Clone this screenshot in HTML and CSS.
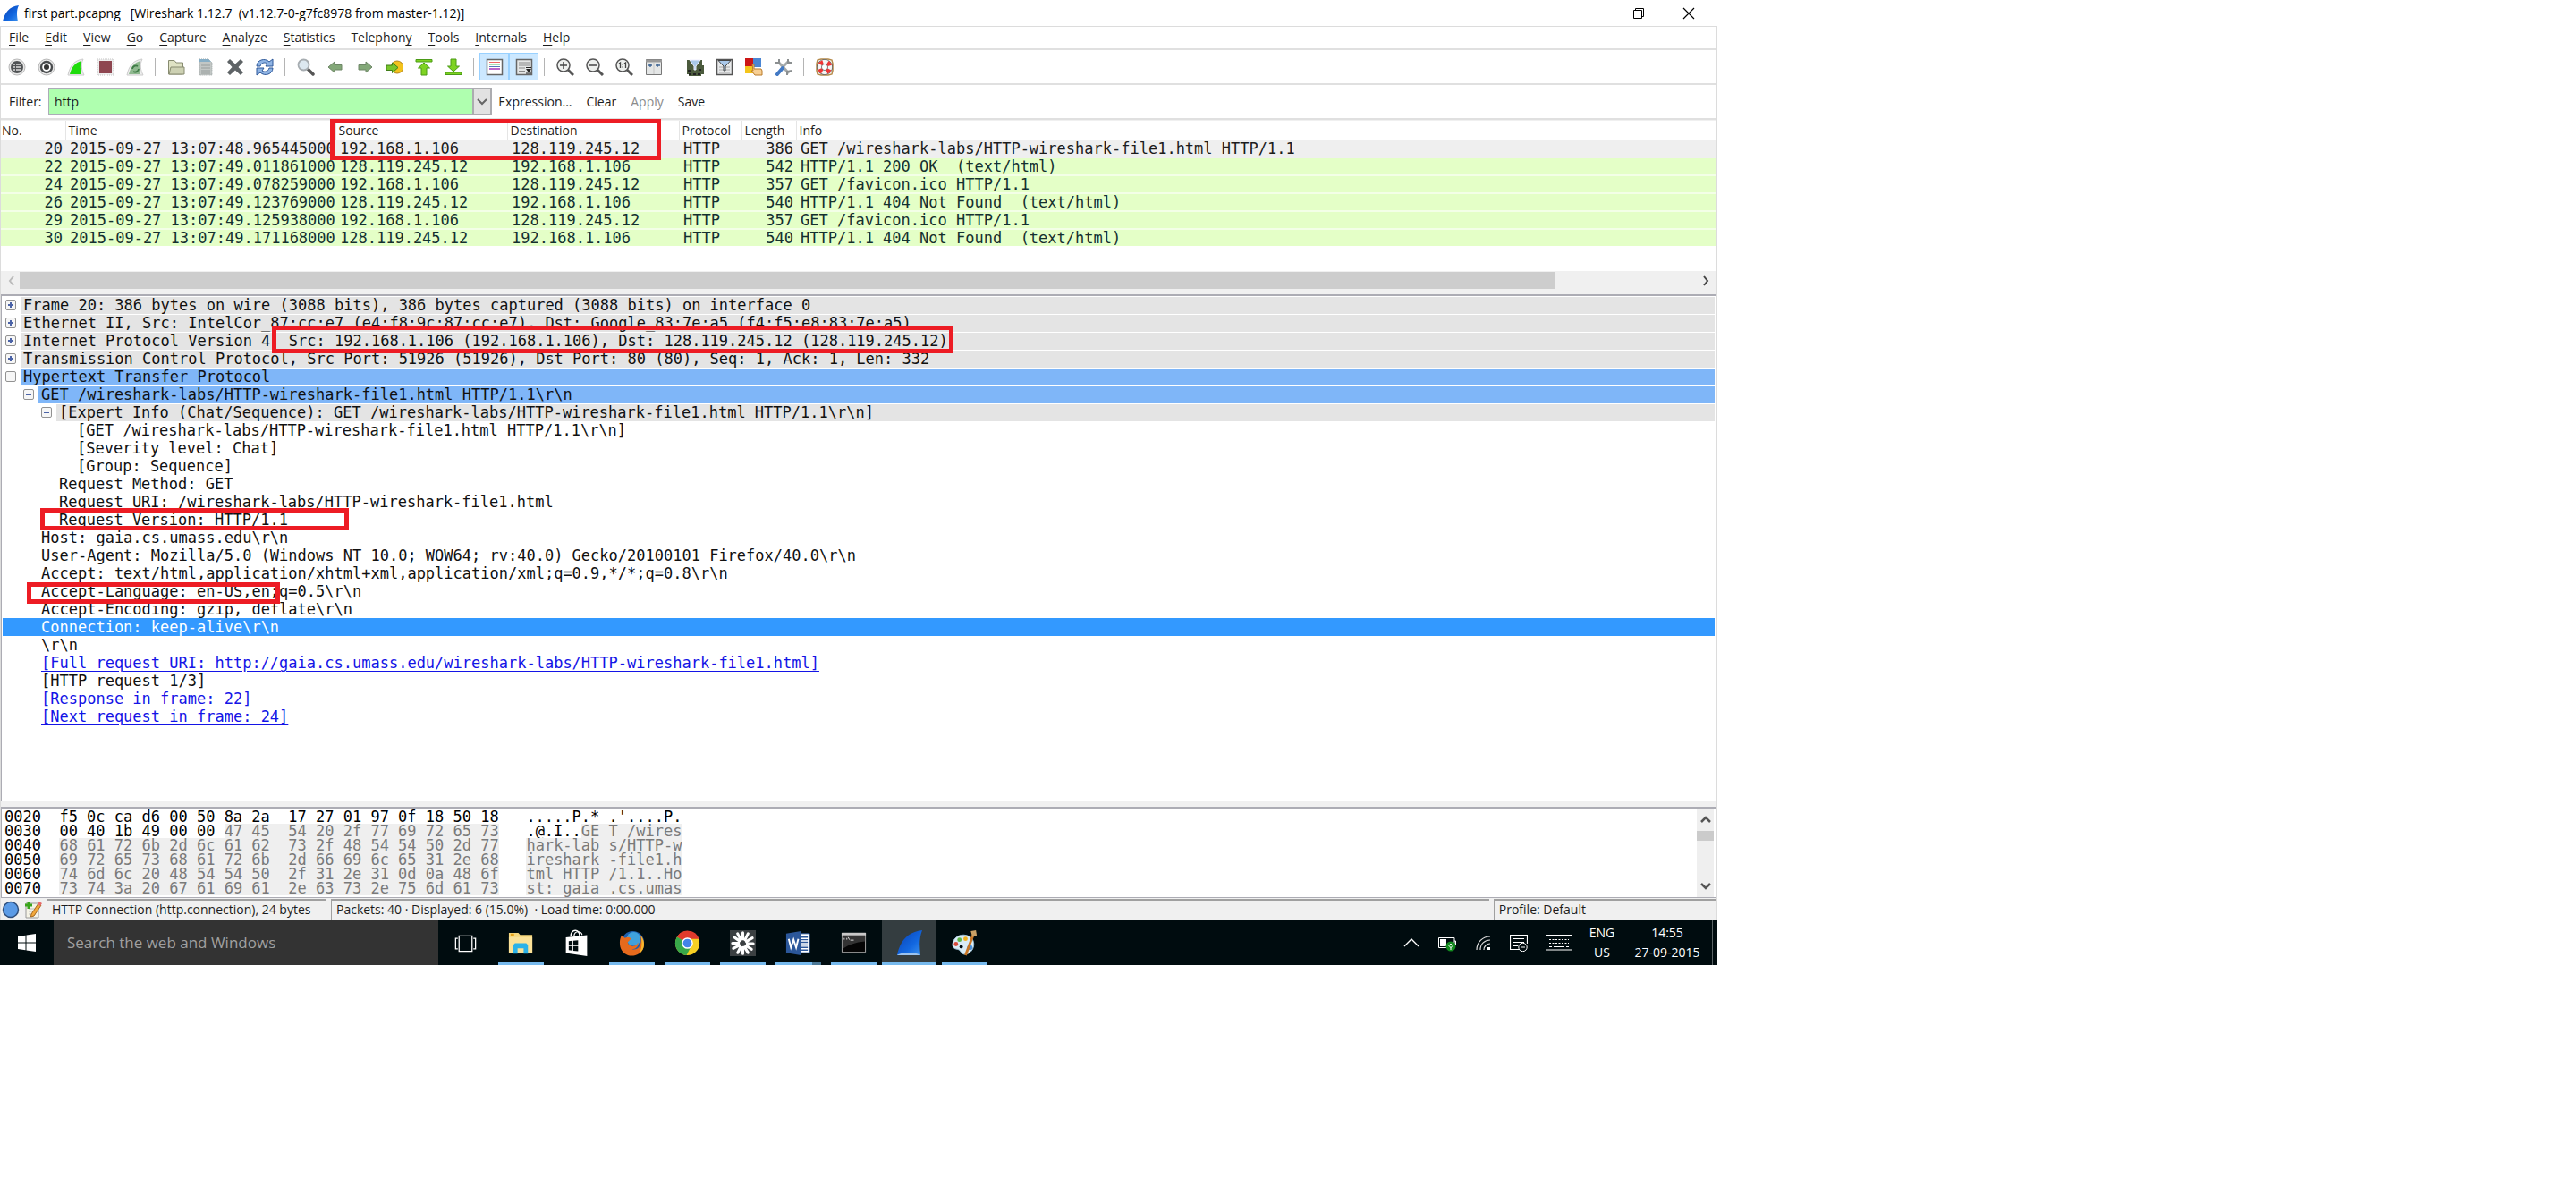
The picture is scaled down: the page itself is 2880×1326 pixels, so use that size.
FILE: index.html
```html
<!DOCTYPE html>
<html lang="en">
<head>
<meta charset="utf-8">
<title>first part.pcapng</title>
<link rel="stylesheet" href="styles.css">
</head>
<body>
<div class="screen">
  <header class="titlebar">
    <svg class="title-icon" viewBox="0 0 20 20"><defs><linearGradient id="fin" x1="0" y1="0" x2="1" y2="1"><stop offset="0" stop-color="#0a3fb0"/><stop offset=".6" stop-color="#1267e0"/><stop offset="1" stop-color="#3f95ee"/></linearGradient></defs><path d="M1 19C3 10 8 2 19 1C16 7 17 13 18 19Z" fill="url(#fin)"/><path d="M1 19C2 17.500 17 17.500 18 19Z" fill="#9cc3ee"/></svg>
    <h1 class="title">first part.pcapng &nbsp; [Wireshark 1.12.7 &nbsp;(v1.12.7-0-g7fc8978 from master-1.12)]</h1>
    <div class="window-buttons">
      <button aria-label="Minimize"><svg viewBox="0 0 14 14"><path d="M1 6.500H13" stroke="#000"/></svg></button>
      <button aria-label="Restore"><svg viewBox="0 0 14 14"><path d="M1.500 3.500H10.500V12.500H1.500ZM3.500 3V1.500H12.500V10.500H11" fill="none" stroke="#000"/></svg></button>
      <button aria-label="Close"><svg viewBox="0 0 14 14"><path d="M1 1L13 13M13 1L1 13" stroke="#000" stroke-width="1.200"/></svg></button>
    </div>
  </header>

  <main class="app">
    <nav class="menubar">
      <button><u>F</u>ile</button><button><u>E</u>dit</button><button><u>V</u>iew</button><button><u>G</u>o</button><button><u>C</u>apture</button><button><u>A</u>nalyze</button><button><u>S</u>tatistics</button><button>Telephon<u>y</u></button><button><u>T</u>ools</button><button><u>I</u>nternals</button><button><u>H</u>elp</button>
    </nav>

    <div class="toolbar">
      <div class="tool-group">
        <button aria-label="Interfaces"><svg viewBox="0 0 20 20"><circle cx="10" cy="10" r="9" fill="#e8e8e8" stroke="#b8b8b8"/><circle cx="10" cy="10" r="7" fill="#505355"/><path d="M6 7h2M6 10h2M6 13h2M9 7h5M9 10h5M9 13h5" stroke="#ddd" stroke-width="1.600"/></svg></button>
        <button aria-label="Options"><svg viewBox="0 0 20 20"><circle cx="10" cy="10" r="9" fill="#e8e8e8" stroke="#b8b8b8"/><circle cx="10" cy="10" r="6" fill="#fff" stroke="#484b4d" stroke-width="2.400"/><circle cx="10" cy="10" r="3" fill="#333"/></svg></button>
        <button aria-label="Start"><svg viewBox="0 0 20 20"><path d="M1 19C3 9 8 2 18 1C15 7 16 13 19 19Z" fill="#eee" stroke="#ccc"/><path d="M3 18C5 10 9 5 16 3C14 8 15 13 16 18Z" fill="#1fdc0c"/></svg></button>
        <button aria-label="Stop"><svg viewBox="0 0 20 20"><path d="M1 1H19V19H1Z" fill="#eee" stroke="#c5c5c5" stroke-dasharray="1 1"/><path d="M3 3H17V17H3Z" fill="#8e4650"/></svg></button>
        <button aria-label="Restart"><svg viewBox="0 0 20 20"><path d="M1 19C3 9 8 2 18 1C15 7 16 13 19 19Z" fill="#eee" stroke="#ccc"/><path d="M3 18C5 10 9 5 16 3C14 8 15 13 16 18Z" fill="#8fb98f"/><path d="M7 12a4 4 0 0 1 6-3M14 12a4 4 0 0 1-6 3" stroke="#3d7a45" stroke-width="1.800" fill="none"/></svg></button>
      </div>
      <div class="tool-group">
        <button aria-label="Open"><svg viewBox="0 0 20 20"><path d="M1.500 18V2.500H8L10 5H17.500V18Z" fill="#dfe2c4" stroke="#878b70"/><path d="M4 10H19V18H2Z" fill="#cdd1b3" stroke="#878b70"/></svg></button>
        <button aria-label="Save"><svg viewBox="0 0 20 20"><path d="M3 1H13L17 5V19H3Z" fill="#c2c7c5" stroke="#9aa2a2" stroke-dasharray="1 1"/><path d="M3 1H13L16 4H3Z" fill="#86aec6"/><path d="M5 8h10M5 11h10M5 14h10M5 17h10" stroke="#979d9c"/></svg></button>
        <button aria-label="Close file"><svg viewBox="0 0 20 20"><path d="M4 1L10 6.500L16 1L19 4L13.500 10L19 16L16 19L10 13.500L4 19L1 16L6.500 10L1 4Z" fill="#5e6366"/></svg></button>
        <button aria-label="Reload"><svg viewBox="0 0 20 20"><path d="M1 9C1 2 10 -1 15 4L19 1V9H11L13 6C10 4 6 5 5 9Z" fill="#8fb4e4" stroke="#2c5799"/><path d="M19 11C19 18 10 21 5 16L1 19V11H9L7 14C10 16 14 15 15 11Z" fill="#8fb4e4" stroke="#2c5799"/></svg></button>
      </div>
      <div class="tool-group">
        <button aria-label="Find"><svg viewBox="0 0 20 20"><path d="M12 12L18 18" stroke="#555" stroke-width="3.500" stroke-linecap="round"/><circle cx="7.500" cy="7.500" r="6" fill="#dce8f0" stroke="#a7adb1" stroke-width="1.800"/></svg></button>
        <button aria-label="Back"><svg viewBox="0 0 20 20"><path d="M2 10L9 4V7.500H17V13H9V16Z" fill="#83a878" stroke="#6e8667"/></svg></button>
        <button aria-label="Forward"><svg viewBox="0 0 20 20"><path d="M18 10L11 4V7.500H3V13H11V16Z" fill="#83a878" stroke="#6e8667"/></svg></button>
        <button aria-label="Go to packet"><svg viewBox="0 0 20 20"><circle cx="13" cy="10" r="7" fill="#f3c21c" stroke="#b4841a"/><path d="M14 10.500L7.500 5V8H1V13.500H7.500V16.500Z" fill="#79c62b" stroke="#3f7d18"/></svg></button>
        <button aria-label="First packet"><svg viewBox="0 0 20 20"><path d="M1 1.500H19V4H1ZM10 5L16.500 11H13V19H7V11H3.500Z" fill="#7ed321" stroke="#4a9a17"/></svg></button>
        <button aria-label="Last packet"><svg viewBox="0 0 20 20"><path d="M1 18.500H19V16H1ZM10 15L16.500 9H13V1H7V9H3.500Z" fill="#7ed321" stroke="#4a9a17"/></svg></button>
      </div>
      <div class="tool-group">
        <button class="on" aria-label="Colorize"><svg viewBox="0 0 20 20"><path d="M1.500 1.500H18.500V18.500H1.500Z" fill="#fff" stroke="#666" stroke-width="1.500"/><path d="M4 4.500H16" stroke="#e66" /><path d="M4 7H16" stroke="#5b6"/><path d="M4 9.500H16" stroke="#57b"/><path d="M4 12H16" stroke="#b6c" stroke-width="2"/><path d="M4 15.500H16" stroke="#555"/></svg></button>
        <button class="on" aria-label="Auto scroll"><svg viewBox="0 0 20 20"><path d="M1.500 1.500H18.500V18.500H1.500Z" fill="#e4e6e6" stroke="#666" stroke-width="1.500"/><path d="M4 5h12M4 8h12M4 11h7M4 14.500h7" stroke="#888"/><path d="M12 10.500h6M12 17h6" stroke="#222"/><path d="M12 12h6l-3 4z" fill="#222"/></svg></button>
      </div>
      <div class="tool-group">
        <button aria-label="Zoom in"><svg viewBox="0 0 20 20"><path d="M13 13L19 19" stroke="#555" stroke-width="3"/><circle cx="8" cy="8" r="7" fill="#eef0ee" stroke="#555" stroke-width="1.500"/><path d="M4 8H12M8 4V12" stroke="#444" stroke-width="1.500"/></svg></button>
        <button aria-label="Zoom out"><svg viewBox="0 0 20 20"><path d="M13 13L19 19" stroke="#555" stroke-width="3"/><circle cx="8" cy="8" r="7" fill="#eef0ee" stroke="#555" stroke-width="1.500"/><path d="M4 8H12" stroke="#444" stroke-width="1.500"/></svg></button>
        <button aria-label="Normal size"><svg viewBox="0 0 20 20"><path d="M13 13L19 19" stroke="#555" stroke-width="3"/><circle cx="8" cy="8" r="7" fill="#eef0ee" stroke="#555" stroke-width="1.500"/><path d="M4 6L5.500 5V11M10 6L11.500 5V11M8 6.500v1M8 9.500v1" fill="none" stroke="#444" stroke-width="1.300"/></svg></button>
        <button aria-label="Resize columns"><svg viewBox="0 0 20 20"><path d="M1.500 1.500H18.500V18.500H1.500Z" fill="#e4e6e6" stroke="#777"/><path d="M1 3H19" stroke="#999" stroke-width="3"/><path d="M10 5V18" stroke="#c5c5c5"/><path d="M3 8H8M12 8H17M6 6V10M14 6V10" stroke="#3c6393" stroke-width="1.300"/></svg></button>
      </div>
      <div class="tool-group">
        <button aria-label="Capture filters"><svg viewBox="0 0 20 20"><path d="M1 2H18V8H20V18H17V20H3V18H1Z" fill="#4b5a3d"/><path d="M3 18h3M8 18h3M13 18h3M2 14h3M14 13h3" stroke="#222" stroke-width="2"/><path d="M4 2H16L11 9V13H9V9Z" fill="#a9c8ea" stroke="#eef"/></svg></button>
        <button aria-label="Display filters"><svg viewBox="0 0 20 20"><path d="M1.500 1.500H18.500V18.500H1.500Z" fill="#e7e9ea" stroke="#555" stroke-width="1.500"/><path d="M4 10h12M4 13h12M4 16h12" stroke="#aaa"/><path d="M3 2.500H17L11 9V14H9V9Z" fill="#a9c8ea" stroke="#444"/></svg></button>
        <button aria-label="Coloring rules"><svg viewBox="0 0 20 20"><path d="M0 0H9V10H0Z" fill="#cc1616"/><path d="M9 0H18V10H9Z" fill="#4b86d3"/><path d="M0 9H10V17H0Z" fill="#f4c51b"/><path d="M8 7L10 7V12H18L19 14V19H11L7 14L9 14Z" fill="#f7cf94" stroke="#b97a2a"/></svg></button>
        <button aria-label="Preferences"><svg viewBox="0 0 20 20"><path d="M4 4L16 17" stroke="#a4a8a9" stroke-width="3"/><path d="M16 3L9 10" stroke="#a4a8a9" stroke-width="3"/><path d="M9 11L3 18" stroke="#4279c4" stroke-width="4" stroke-linecap="round"/><path d="M1 5L5 5L5 1M15 1L15 5L19 5M14 19L14 15L19 14" stroke="#8b8f90" stroke-width="2" fill="none"/></svg></button>
      </div>
      <div class="tool-group">
        <button aria-label="Help"><svg viewBox="0 0 20 20"><path d="M2 2L6 1H14L18 2L19 6V14L18 18L14 19H6L2 18L1 14V6Z" fill="none" stroke="#b58a4a" stroke-width="1.500"/><circle cx="10" cy="10" r="6" fill="none" stroke="#555" stroke-width="6"/><circle cx="10" cy="10" r="6" fill="none" stroke="#f4f4f4" stroke-width="4.500"/><circle cx="10" cy="10" r="6" fill="none" stroke="#f03434" stroke-width="4.500" stroke-dasharray="4 5.425" stroke-dashoffset="-2.700"/></svg></button>
      </div>
    </div>

    <form class="filterbar">
      <label for="filter">Filter:</label>
      <div class="combo">
        <input id="filter" type="text" value="http">
        <button type="button" aria-label="Filter history"><svg viewBox="0 0 12 8"><path d="M1 1L6 6L11 1" fill="none" stroke="#666" stroke-width="2"/></svg></button>
      </div>
      <div class="filter-actions">
        <button type="button">Expression...</button>
        <button type="button">Clear</button>
        <button type="button" disabled>Apply</button>
        <button type="button">Save</button>
      </div>
    </form>

    <section class="packets">
      <table>
        <colgroup><col class="c-no"><col class="c-time"><col class="c-src"><col class="c-src"><col class="c-proto"><col class="c-len"><col></colgroup>
        <thead><tr><th>No.</th><th>Time</th><th>Source</th><th>Destination</th><th>Protocol</th><th>Length</th><th>Info</th></tr></thead>
        <tbody>
          <tr class="current"><td class="num">20</td><td>2015-09-27 13:07:48.965445000</td><td>192.168.1.106</td><td>128.119.245.12</td><td>HTTP</td><td class="num">386</td><td>GET /wireshark-labs/HTTP-wireshark-file1.html HTTP/1.1</td></tr>
          <tr><td class="num">22</td><td>2015-09-27 13:07:49.011861000</td><td>128.119.245.12</td><td>192.168.1.106</td><td>HTTP</td><td class="num">542</td><td>HTTP/1.1 200 OK  (text/html)</td></tr>
          <tr><td class="num">24</td><td>2015-09-27 13:07:49.078259000</td><td>192.168.1.106</td><td>128.119.245.12</td><td>HTTP</td><td class="num">357</td><td>GET /favicon.ico HTTP/1.1</td></tr>
          <tr><td class="num">26</td><td>2015-09-27 13:07:49.123769000</td><td>128.119.245.12</td><td>192.168.1.106</td><td>HTTP</td><td class="num">540</td><td>HTTP/1.1 404 Not Found  (text/html)</td></tr>
          <tr><td class="num">29</td><td>2015-09-27 13:07:49.125938000</td><td>192.168.1.106</td><td>128.119.245.12</td><td>HTTP</td><td class="num">357</td><td>GET /favicon.ico HTTP/1.1</td></tr>
          <tr><td class="num">30</td><td>2015-09-27 13:07:49.171168000</td><td>128.119.245.12</td><td>192.168.1.106</td><td>HTTP</td><td class="num">540</td><td>HTTP/1.1 404 Not Found  (text/html)</td></tr>
        </tbody>
      </table>
      <div class="hscroll">
        <svg viewBox="0 0 8 12"><path d="M6 1L2 6L6 11" fill="none" stroke="#bbb" stroke-width="2"/></svg>
        <div class="htrack"><div class="hthumb"></div></div>
        <svg viewBox="0 0 8 12"><path d="M2 1L6 6L2 11" fill="none" stroke="#444" stroke-width="2"/></svg>
      </div>
      <div class="mark mark-hosts"></div>
    </section>

    <section class="details">
      <ul class="tree">
        <li class="l0 head"><button class="exp plus" aria-label="Expand"></button><span>Frame 20: 386 bytes on wire (3088 bits), 386 bytes captured (3088 bits) on interface 0</span></li>
        <li class="l0 head"><button class="exp plus" aria-label="Expand"></button><span>Ethernet II, Src: IntelCor_87:cc:e7 (e4:f8:9c:87:cc:e7), Dst: Google_83:7e:a5 (f4:f5:e8:83:7e:a5)</span></li>
        <li class="l0 head"><button class="exp plus" aria-label="Expand"></button><span>Internet Protocol Version 4, Src: 192.168.1.106 (192.168.1.106), Dst: 128.119.245.12 (128.119.245.12)</span></li>
        <li class="l0 head"><button class="exp plus" aria-label="Expand"></button><span>Transmission Control Protocol, Src Port: 51926 (51926), Dst Port: 80 (80), Seq: 1, Ack: 1, Len: 332</span></li>
        <li class="l0 proto"><button class="exp" aria-label="Collapse"></button><span>Hypertext Transfer Protocol</span></li>
        <li class="l1 proto"><button class="exp" aria-label="Collapse"></button><span>GET /wireshark-labs/HTTP-wireshark-file1.html HTTP/1.1\r\n</span></li>
        <li class="l2 head"><button class="exp" aria-label="Collapse"></button><span>[Expert Info (Chat/Sequence): GET /wireshark-labs/HTTP-wireshark-file1.html HTTP/1.1\r\n]</span></li>
        <li class="l3"><span>[GET /wireshark-labs/HTTP-wireshark-file1.html HTTP/1.1\r\n]</span></li>
        <li class="l3"><span>[Severity level: Chat]</span></li>
        <li class="l3"><span>[Group: Sequence]</span></li>
        <li class="l2"><span>Request Method: GET</span></li>
        <li class="l2"><span>Request URI: /wireshark-labs/HTTP-wireshark-file1.html</span></li>
        <li class="l2"><span>Request Version: HTTP/1.1</span></li>
        <li class="l1"><span>Host: gaia.cs.umass.edu\r\n</span></li>
        <li class="l1"><span>User-Agent: Mozilla/5.0 (Windows NT 10.0; WOW64; rv:40.0) Gecko/20100101 Firefox/40.0\r\n</span></li>
        <li class="l1"><span>Accept: text/html,application/xhtml+xml,application/xml;q=0.9,*/*;q=0.8\r\n</span></li>
        <li class="l1"><span>Accept-Language: en-US,en;q=0.5\r\n</span></li>
        <li class="l1"><span>Accept-Encoding: gzip, deflate\r\n</span></li>
        <li class="l1 selected"><span>Connection: keep-alive\r\n</span></li>
        <li class="l1"><span>\r\n</span></li>
        <li class="l1"><a href="#">[Full request URI: http://gaia.cs.umass.edu/wireshark-labs/HTTP-wireshark-file1.html]</a></li>
        <li class="l1"><span>[HTTP request 1/3]</span></li>
        <li class="l1"><a href="#">[Response in frame: 22]</a></li>
        <li class="l1"><a href="#">[Next request in frame: 24]</a></li>
      </ul>
      <div class="mark mark-ip"></div>
      <div class="mark mark-version"></div>
      <div class="mark mark-language"></div>
    </section>

    <section class="bytes">
<pre>0020  f5 0c ca d6 00 50 8a 2a  17 27 01 97 0f 18 50 18   .....P.* .'....P.
0030  00 40 1b 49 00 00 <mark>47 45  54 20 2f 77 69 72 65 73</mark>   .@.I..<mark>GE T /wires</mark>
0040  <mark>68 61 72 6b 2d 6c 61 62  73 2f 48 54 54 50 2d 77</mark>   <mark>hark-lab s/HTTP-w</mark>
0050  <mark>69 72 65 73 68 61 72 6b  2d 66 69 6c 65 31 2e 68</mark>   <mark>ireshark -file1.h</mark>
0060  <mark>74 6d 6c 20 48 54 54 50  2f 31 2e 31 0d 0a 48 6f</mark>   <mark>tml HTTP /1.1..Ho</mark>
0070  <mark>73 74 3a 20 67 61 69 61  2e 63 73 2e 75 6d 61 73</mark>   <mark>st: gaia .cs.umas</mark></pre>
      <div class="vscroll">
        <svg viewBox="0 0 12 8"><path d="M1 7L6 2L11 7" fill="none" stroke="#555" stroke-width="2.500"/></svg>
        <div class="vtrack"><div class="vthumb"></div></div>
        <svg viewBox="0 0 12 8"><path d="M1 1L6 6L11 1" fill="none" stroke="#555" stroke-width="2.500"/></svg>
      </div>
    </section>

    <footer class="statusbar">
      <button aria-label="Expert info"><svg viewBox="0 0 20 20"><circle cx="10" cy="10" r="8.500" fill="#5b9be6" stroke="#2f4f7c" stroke-width="1.500"/></svg></button>
      <button aria-label="Capture comments"><svg viewBox="0 0 20 20"><path d="M2 3H16V19H2Z" fill="#f5f3e6" stroke="#999"/><path d="M5 9h8M5 12h6M5 15h8" stroke="#bbb"/><path d="M5 1V9M1 5H9" stroke="#39a51b" stroke-width="3"/><path d="M8 15L16 3L19 5L11 17L7.500 18Z" fill="#f2a83b" stroke="#a5671d"/><path d="M15 4L17 1L20 3L18 6Z" fill="#e56a6a"/></svg></button>
      <div class="field field-a">HTTP Connection (http.connection), 24 bytes</div>
      <div class="field field-b">Packets: 40 · Displayed: 6 (15.0%) &nbsp;· Load time: 0:00.000</div>
      <div class="field field-c">Profile: Default</div>
    </footer>
  </main>

  <div class="taskbar">
    <button class="start" aria-label="Start menu"><svg viewBox="0 0 20 20"><path d="M0 3L8.500 1.800V9.500H0ZM9.500 1.600L20 0V9.500H9.500ZM0 10.500H8.500V18.200L0 17ZM9.500 10.500H20V20L9.500 18.400Z" fill="#fff"/></svg></button>
    <input class="search" type="text" placeholder="Search the web and Windows" aria-label="Search">
    <div class="tasks">
      <button aria-label="Task view"><svg viewBox="0 0 32 32"><path d="M8.500 7.500H23.500V25.500H8.500ZM7 10.500H4.500V22.500H7M25 10.500H27.500V22.500H25" fill="none" stroke="#fff" stroke-width="1.300"/></svg></button>
      <button class="run" aria-label="File Explorer"><svg viewBox="0 0 32 32"><path d="M2 4H13L15 6.500H29V27H2Z" fill="#f6d77c"/><path d="M4 5H8V8H4Z" fill="#e8a317"/><path d="M2 9H29V27H2Z" fill="#fbe298"/><path d="M7 28V18L9 16H22L24 18V28H19V22H12V28Z" fill="#2bb2e8"/></svg></button>
      <button aria-label="Store"><svg viewBox="0 0 32 34"><path d="M9 9C9 -1 20 -1 20 8" fill="none" stroke="#fff" stroke-width="1.800"/><path d="M13 8C14 1 22 2 23 7" fill="none" stroke="#fff" stroke-width="1.300"/><path d="M3 10L29 7V33L3 29Z" fill="#fff"/><path d="M6.500 14.500L11 14V19.500H6.500ZM12 14L18 13.300V19.500H12ZM6.500 20.500H11V26L6.500 25.500ZM12 20.500H18V27L12 26.200Z" fill="#000c0f"/></svg></button>
      <button class="run" aria-label="Firefox"><svg viewBox="0 0 32 32"><circle cx="17" cy="15" r="13" fill="#1d5fae"/><circle cx="18" cy="11" r="8" fill="#3fa1dc"/><path d="M4 7L8 10C11 8 14 9 15 11L11 15C13 21 21 21 23 15C24 19 21 23 16 23C24 25 28 17 26 7C32 14 31 24 24 28C16 33 5 30 2.500 20C1.500 15 2 11 4 7Z" fill="#e66a1d"/><path d="M26 7C32 14 31 24 24 28C28 22 28 14 26 7Z" fill="#f7b72c"/></svg></button>
      <button class="run" aria-label="Chrome"><svg viewBox="0 0 32 32"><circle cx="16" cy="16" r="14" fill="#f6d023"/><path d="M16 16L4 9A14 14 0 0 1 29.500 11H16Z" fill="#df3a2d"/><path d="M16 16L4 8.700A14 14 0 0 0 15 30L21 18Z" fill="#37a849"/><circle cx="16" cy="16" r="6.500" fill="#fff"/><circle cx="16" cy="16" r="5" fill="#4384e8"/></svg></button>
      <button class="run" aria-label="Photo tool"><svg viewBox="0 0 32 32"><path d="M1 1H31V31H1Z" fill="#3b4042"/><g stroke="#fff" stroke-width="3.200" stroke-linecap="round"><path d="M16 11V4M18.500 12L22 5M20 14L27 10M21 16.500H28M20 19L26 23M18 20.500L22 27M16 21V28M13.500 20.500L10 27M12 18.500L5 22M11 16H4M12 13.500L6 9M13.500 12L10 5"/></g></svg></button>
      <button class="run stacked" aria-label="Word"><svg viewBox="0 0 32 32"><path d="M16 5H29V27H16Z" fill="#fff" stroke="#2b579a"/><path d="M18 9h9M18 12h9M18 15h9M18 18h9M18 21h9M18 24h9" stroke="#2b579a" stroke-width="1.500"/><path d="M2 5L19 2V30L2 27Z" fill="#2b579a"/><path d="M5 11L7.500 21L10.500 12L13.500 21L16 11" fill="none" stroke="#fff" stroke-width="2"/></svg></button>
      <button class="run" aria-label="Command Prompt"><svg viewBox="0 0 32 32"><path d="M2.500 4.500H29.500V26.500H2.500Z" fill="#050505" stroke="#aaa"/><path d="M2 4H30V7H2Z" fill="#c9c9c9"/><path d="M3 8H29V14C18 15 9 18 3 23Z" fill="#333"/><path d="M5 10v2M8 10v2M9.500 9l1.500 3M12 12.500h4" stroke="#ddd"/></svg></button>
      <button class="run active" aria-label="Wireshark"><svg viewBox="0 0 32 32"><path d="M2 30C5 15 13 3 31 1C27 11 28 21 29 30Z" fill="url(#fin)"/><path d="M2 30C4 26 27 26 29 30Z" fill="#9cc3ee"/></svg></button>
      <button class="run" aria-label="Paint"><svg viewBox="0 0 32 32"><path d="M2 17C3 8 13 4 21 8C29 12 28 24 20 28C13 31 12 26 10 24C7 22 2 24 2 17Z" fill="#d9ebf5" stroke="#9bc0d6"/><circle cx="6" cy="17" r="2.500" fill="#d84a3b"/><circle cx="10" cy="12" r="2.500" fill="#5fb548"/><circle cx="17" cy="11" r="2.500" fill="#f2b01f"/><circle cx="12" cy="20" r="2" fill="#000c0f"/><circle cx="22" cy="21" r="3" fill="#4a8fd8"/><path d="M26 6L17 30" stroke="#c87524" stroke-width="3"/><path d="M23 2L29 1L30 7L25 9Z" fill="#c9a066"/></svg></button>
    </div>
    <div class="tray">
      <button class="t-chev" aria-label="Show hidden icons"><svg viewBox="0 0 20 20"><path d="M2 14L10 6L18 14" fill="none" stroke="#fff" stroke-width="1.300"/></svg></button>
      <button aria-label="Battery"><svg viewBox="0 0 20 20"><path d="M.5 4.500H18V15.500H.5ZM18 8H19.500V12" fill="none" stroke="#fff"/><path d="M2 6H9V14H2Z" fill="#fff"/><circle cx="14" cy="14" r="5.500" fill="#128a1e"/><path d="M14 11L16 13.500L14 15.500L12 13.500ZM14 15V18" fill="none" stroke="#fff"/></svg></button>
      <button aria-label="Network"><svg viewBox="0 0 20 20"><path d="M3 18C3 9 10 3 18 3M7 18C7 11 12 7 18 7M11 18C11 14 14 11 18 11" fill="none" stroke="#ddd" stroke-width="1.200"/><path d="M15 15H18V18H15Z" fill="#fff"/></svg></button>
      <button aria-label="Notifications"><svg viewBox="0 0 20 20"><path d="M11 17.500H.5V1.500H19.500V11M4 5.500H16M4 9.500H16M4 13.500H9" fill="none" stroke="#fff" stroke-width="1.200"/><circle cx="14.500" cy="15" r="4.700" fill="#000c0f" stroke="#fff"/><path d="M12 15H17" stroke="#fff"/></svg></button>
      <button class="t-kbd" aria-label="Touch keyboard"><svg viewBox="0 0 30 18"><path d="M.5 .5H29.500V17H.5Z" fill="none" stroke="#fff"/><path d="M4 5.500H26M4 9.500H26" stroke="#fff" stroke-dasharray="2 1.500"/><path d="M4 13.500H7M9 13.500H21M23 13.500H26" stroke="#fff"/></svg></button>
      <button class="t-lang">ENG<br>US</button>
      <button class="t-clock">14:55<br>27-09-2015</button>
      <button class="t-desk" aria-label="Show desktop"></button>
    </div>
  </div>
</div>
</body>
</html>
```
FILE: styles.css
```css
* { box-sizing: border-box; }

body {
  margin: 0;
  background: #fff;
  color: #1c1c1c;
  font: 14px/20px "Open Sans", "Noto Sans", sans-serif;
}

button, input { font: inherit; color: inherit; }

button {
  display: flex;
  align-items: center;
  justify-content: center;
  padding: 0;
  border: 0;
  background: none;
}

svg { display: block; }

.screen { width: calc(100% * 2 / 3); }

/* title bar */
.titlebar {
  display: flex;
  align-items: center;
  height: 29px;
  padding-left: 2px;
}
.title-icon { width: 20px; height: 20px; }
.title {
  flex: 1;
  margin: 0 0 0 5px;
  font-size: 14px;
  font-weight: 400;
  color: #000;
}
.window-buttons { display: flex; padding-right: 4px; }
.window-buttons button { width: 56px; height: 28px; }
.window-buttons svg { width: 14px; height: 14px; }

.app {
  background: #f0f0f0;
  border: 1px solid #dcdcdc;
  border-width: 1px 1px 0;
}

/* menu */
.menubar {
  display: flex;
  gap: 18px;
  height: 26px;
  padding: 0 9px;
  background: #fff;
  border-bottom: 2px solid #e0e0e0;
}
.menubar u { text-underline-offset: 3px; }

/* toolbar */
.toolbar {
  display: flex;
  align-items: center;
  height: 39px;
  padding: 0 1px;
  background: #fff;
  border-bottom: 2px solid #e0e0e0;
}
.tool-group { display: flex; align-items: center; }
.tool-group + .tool-group::before {
  content: "";
  width: 1px;
  height: 20px;
  margin: 0 6px;
  background: #b4b4b4;
}
.tool-group button { width: 33px; height: 31px; }
.tool-group svg { width: 20px; height: 20px; }
.tool-group .on { background: #cce8ff; border: 1px solid #99d1ff; }

/* filter */
.filterbar {
  display: flex;
  align-items: center;
  height: 39px;
  padding-left: 9px;
  background: #fff;
  border-bottom: 2px solid #e0e0e0;
}
.filterbar label { width: 44px; }
.combo { display: flex; width: 26%; height: 31px; }
.combo input {
  flex: 1;
  min-width: 0;
  padding: 0 6px;
  background: #afffaf;
  border: 1px solid #acacb8;
  border-right: 0;
}
.combo button {
  width: 22px;
  background: #e2e2e2;
  border: 2px solid #acacb0;
}
.combo button svg { width: 12px; height: 8px; }
.filter-actions { display: flex; gap: 16px; padding-left: 7px; }
.filter-actions button:disabled { color: #8b8b8b; }

/* packet list */
.packets {
  position: relative;
  padding-top: 1px;
}
.packets table {
  width: 100%;
  table-layout: fixed;
  border-collapse: collapse;
}
.c-no { width: 72px; }
.c-time { width: 302px; }
.c-src { width: 192px; }
.c-proto { width: 70px; }
.c-len { width: 61px; }
.packets th {
  height: 21px;
  padding: 0 0 0 3px;
  background: #fff;
  border-left: 1px solid #e5e5e5;
  font-weight: 400;
  text-align: left;
}
.packets th:first-child { padding-left: 1px; border-left: 0; }
.packets td, .tree, .bytes pre {
  font-family: "DejaVu Sans Mono", monospace;
  font-size: 17px;
}
.packets td {
  height: 20px;
  padding: 0 0 0 5px;
  background: #e4ffc7;
  border-bottom: 2px solid #f3ffe7;
  line-height: 18px;
  white-space: pre;
  color: #14302f;
}
.packets .num { padding: 0 3px 0 0; text-align: right; }
.packets .current td { background: #efefef; border-color: #efefef; color: #1c1c1c; }
.packets table { border-bottom: 28px solid #fff; }

.hscroll {
  display: flex;
  align-items: center;
  height: 26px;
  padding: 0 3px 5px;
}
.hscroll svg { width: 8px; height: 12px; margin: 0 5px; }
.htrack { flex: 1; height: 19px; }
.hthumb { width: 91.5%; height: 19px; background: #cdcdcd; }

/* packet details */
.details {
  position: relative;
  height: 567px;
  background: #fff;
  border: 1px solid #acacb4;
  border-top-width: 2px;
}
.tree { margin: 0; padding: 0 1px; list-style: none; line-height: 20px; color: #111; }
.tree li { display: flex; align-items: center; height: 20px; white-space: pre; }
.tree li > span, .tree li > a { flex: 1; padding-left: 3px; }
.tree a { color: #1414e6; text-underline-offset: 3px; }
.l0 { padding-left: 20px; }
.l1 { padding-left: 40px; }
.l2 { padding-left: 60px; }
.l3 { padding-left: 80px; }
.tree li > span { height: 19px; line-height: 19px; }
.head > span { background: #e4e4e4; }
.proto > span { background: #7fb6f8; }
.tree .selected { background: #3399ff; color: #fff; }

.exp {
  width: 12px;
  height: 12px;
  margin: 0 5px 0 -17px;
  border: 1px solid #929292;
  border-radius: 2px;
  background: linear-gradient(#4b63a7, #4b63a7) center / 6px 1px no-repeat, #f6f6f6;
}
.exp.plus {
  background: linear-gradient(#4b63a7, #4b63a7) center / 6px 2px no-repeat, linear-gradient(#4b63a7, #4b63a7) center / 2px 6px no-repeat, #f6f6f6;
}

/* annotations */
.mark { position: absolute; border: 5px solid #ed1c24; pointer-events: none; }
.mark-hosts { left: 368px; top: -1px; width: 370px; height: 46px; }
.mark-ip { left: 302px; top: 33px; width: 762px; height: 31px; }
.mark-version { left: 43px; top: 237px; width: 345px; height: 25px; }
.mark-language { left: 28px; top: 320px; width: 283px; height: 24px; }

/* packet bytes */
.bytes {
  display: flex;
  justify-content: space-between;
  margin-top: 6px;
  background: #fff;
  border: 1px solid #acacb4;
  border-top-width: 2px;
}
.bytes pre { margin: 0; padding: 1px 3px 2px; line-height: 16px; color: #000; }
.bytes mark {
  display: inline-block;
  height: 16px;
  vertical-align: top;
  background: #efefef;
  color: #7a7a7a;
}
.vscroll {
  display: flex;
  flex-direction: column;
  align-items: center;
  width: 19px;
  margin-right: 2px;
  padding: 8px 0;
  background: #efefef;
}
.vscroll svg { width: 12px; height: 8px; }
.vtrack { flex: 1; width: 100%; padding-top: 9px; }
.vthumb { height: 11px; background: #cbcbcb; }

/* status bar */
.statusbar {
  display: flex;
  align-items: center;
  gap: 5px;
  height: 25px;
  padding: 1px 0 0 1px;
}
.statusbar svg { width: 20px; height: 20px; }
.field {
  height: 24px;
  padding-left: 5px;
  border: 1px solid #a0a0a0;
  border-width: 2px 0 0 1px;
  white-space: nowrap;
}
.field-a { width: 313px; }
.field-b { flex: 1; }
.field-c { width: 13%; }

/* taskbar */
.taskbar {
  display: flex;
  height: 50px;
  background: #000c0f;
  color: #fff;
}
.start { width: 60px; }
.start svg { width: 20px; height: 20px; }
.search {
  width: 430px;
  padding: 0 15px;
  border: 0;
  background: #333;
  font-size: 17px;
}
.search::placeholder { color: #a0a0a0; opacity: 1; }
.tasks { display: flex; gap: 1px; }
.tasks button { position: relative; width: 61px; height: 50px; }
.tasks svg { width: 31px; height: 31px; }
.tasks .active { background: #343d40; }
.tasks .run::after {
  content: "";
  position: absolute;
  left: 5px;
  right: 5px;
  bottom: 0;
  height: 3px;
  background: #76b9ed;
}
.tasks .stacked::after { background: linear-gradient(90deg, #76b9ed 80%, #4c7896 80%); }
.tasks .active::after { left: 0; right: 0; }
.tray { display: flex; margin-left: auto; }
.tray svg { width: 20px; height: 20px; }
.tray button { width: 40px; line-height: 22px; }
.tray .t-kbd { width: 50px; }
.tray .t-kbd svg { width: 30px; height: 18px; }
.tray .t-lang { width: 46px; }
.tray .t-clock { width: 100px; }
.tray .t-desk { width: 6px; border-left: 1px solid #5b6466; }
```
